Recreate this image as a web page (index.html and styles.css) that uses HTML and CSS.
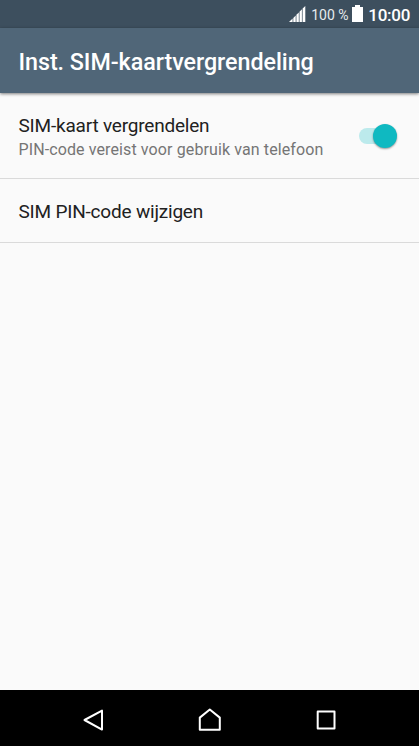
FILE: index.html
```html
<!DOCTYPE html>
<html lang="nl">
<head>
<meta charset="utf-8">
<title>Inst. SIM-kaartvergrendeling</title>
<link rel="stylesheet" href="styles.css">
</head>
<body>
<div class="status">
  <svg class="signal" width="17" height="17" viewBox="0 0 17 17"><path d="M0 16L3.6 12.5V16zM4.3 11.9L6.7 9.5V16H4.3zM7.4 8.8L9.8 6.4V16H7.4zM10.5 5.7L12.9 3.3V16H10.5zM13.6 2.6L16.3 0V16H13.6z" fill="#fff"/></svg>
  <span class="percent">100 %</span>
  <svg class="battery" width="11" height="17" viewBox="0 0 11 17"><path d="M3 0H8V2H11V17H0V2H3z" fill="#fff"/></svg>
  <span class="clock">10:00</span>
</div>
<header class="header"><h1 class="title">Inst. SIM-kaartvergrendeling</h1></header>
<main class="settings">
  <div class="row row-lock">
    <div class="labels">
      <div class="label">SIM-kaart vergrendelen</div>
      <div class="summary">PIN-code vereist voor gebruik van telefoon</div>
    </div>
    <div class="switch"><div class="track"></div><div class="thumb"></div></div>
  </div>
  <div class="row row-change"><div class="label">SIM PIN-code wijzigen</div></div>
</main>
<nav class="nav">
  <svg width="24" height="24" viewBox="0 0 24 24"><path d="M3.5 12L21 2.6V21.6z"/></svg>
  <svg width="24" height="24" viewBox="0 0 24 24"><path d="M1.8 21.8V9.6L11.8 1.5L21.8 9.6V21.8z"/></svg>
  <svg width="24" height="24" viewBox="0 0 24 24"><path d="M3.7 3.6H20.5V20.4H3.7z"/></svg>
</nav>
</body>
</html>
```
FILE: styles.css
```css
* { box-sizing: border-box; }
body {
  margin: 0;
  width: 419px;
  height: 746px;
  display: flex;
  flex-direction: column;
  overflow: hidden;
  background: #fafafa;
  color: #212121;
  font-family: Roboto, sans-serif;
  white-space: nowrap;
}
.status {
  height: 28px;
  flex: none;
  display: flex;
  justify-content: flex-end;
  align-items: flex-start;
  padding: 5px 9px 0 0;
  background: #3d4f5e;
  color: #fff;
}
.signal { margin: 1px 5px 0 0; }
.percent { font-size: 14px; line-height: 20px; margin-right: 4px; color: #e6eaed; letter-spacing: -.05px; }
.battery { margin-right: 5px; }
.clock { font-size: 17px; line-height: 20px; font-weight: 500; letter-spacing: -.3px; }
.header {
  height: 65px;
  flex: none;
  display: flex;
  align-items: center;
  padding: 2px 0 0 18.5px;
  background: #506678;
  box-shadow: 0 1px 3px rgba(0, 0, 0, .5);
}
.title { margin: 0; font-size: 23.3px; line-height: 28px; font-weight: 500; letter-spacing: -.05px; color: #fff; }
.settings { flex: 1; }
.row {
  display: flex;
  align-items: center;
  justify-content: space-between;
  padding: 0 22.5px 0 18.5px;
  border-bottom: 1px solid #dadada;
}
.row-lock { height: 86px; }
.row-change { height: 64px; padding-top: 2px; }
.labels { padding-top: 4px; }
.label { font-size: 19px; line-height: 24px; letter-spacing: -.2px; }
.summary { font-size: 16px; line-height: 23px; letter-spacing: .11px; color: #757575; }
.switch { display: flex; align-items: center; }
.track {
  width: 32px;
  height: 16px;
  margin-right: -18px;
  border-radius: 8px;
  background: #bceaec;
}
.thumb {
  width: 24px;
  height: 24px;
  border-radius: 50%;
  background: #0fb9c1;
  box-shadow: 0 1px 2px rgba(0, 0, 0, .4);
}
.nav {
  height: 56px;
  flex: none;
  display: flex;
  justify-content: space-between;
  align-items: center;
  padding: 4px 81px 0 81px;
  background: #000;
}
.nav svg { fill: none; stroke: #fff; stroke-width: 2; stroke-linejoin: round; }
```
